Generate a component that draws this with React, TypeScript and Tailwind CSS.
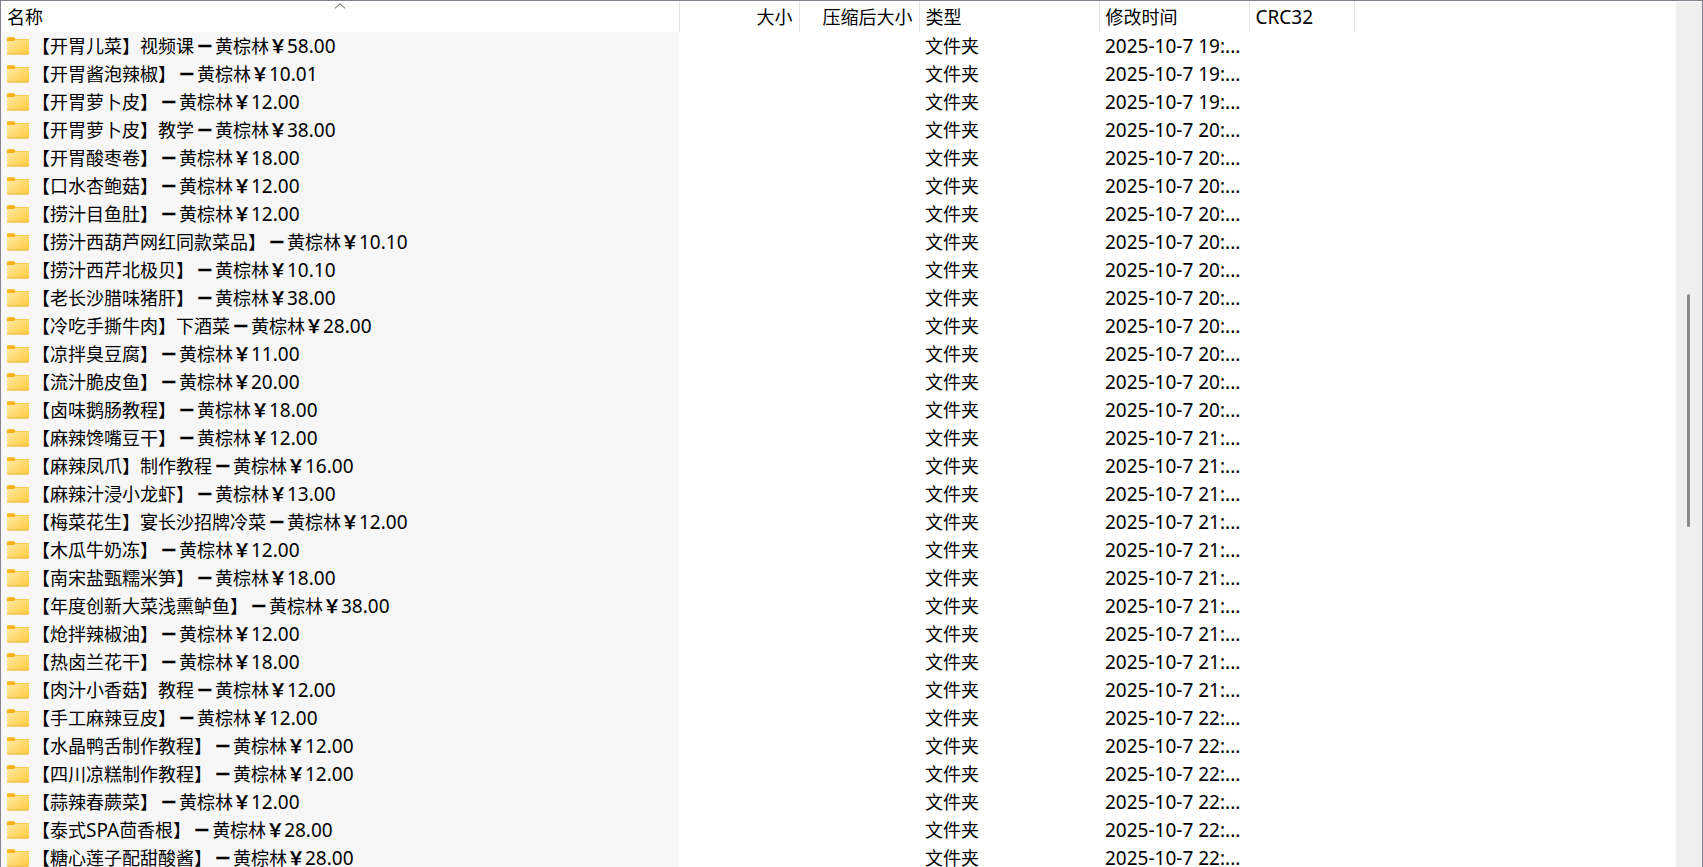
interface Entry {
  title: string;
  price: string;
  modified: string;
}

const entries: Entry[] = [
  { title: '【开胃儿菜】视频课', price: '58.00', modified: '2025-10-7 19:...' },
  { title: '【开胃酱泡辣椒】', price: '10.01', modified: '2025-10-7 19:...' },
  { title: '【开胃萝卜皮】', price: '12.00', modified: '2025-10-7 19:...' },
  { title: '【开胃萝卜皮】教学', price: '38.00', modified: '2025-10-7 20:...' },
  { title: '【开胃酸枣卷】', price: '18.00', modified: '2025-10-7 20:...' },
  { title: '【口水杏鲍菇】', price: '12.00', modified: '2025-10-7 20:...' },
  { title: '【捞汁目鱼肚】', price: '12.00', modified: '2025-10-7 20:...' },
  { title: '【捞汁西葫芦网红同款菜品】', price: '10.10', modified: '2025-10-7 20:...' },
  { title: '【捞汁西芹北极贝】', price: '10.10', modified: '2025-10-7 20:...' },
  { title: '【老长沙腊味猪肝】', price: '38.00', modified: '2025-10-7 20:...' },
  { title: '【冷吃手撕牛肉】下酒菜', price: '28.00', modified: '2025-10-7 20:...' },
  { title: '【凉拌臭豆腐】', price: '11.00', modified: '2025-10-7 20:...' },
  { title: '【流汁脆皮鱼】', price: '20.00', modified: '2025-10-7 20:...' },
  { title: '【卤味鹅肠教程】', price: '18.00', modified: '2025-10-7 20:...' },
  { title: '【麻辣馋嘴豆干】', price: '12.00', modified: '2025-10-7 21:...' },
  { title: '【麻辣凤爪】制作教程', price: '16.00', modified: '2025-10-7 21:...' },
  { title: '【麻辣汁浸小龙虾】', price: '13.00', modified: '2025-10-7 21:...' },
  { title: '【梅菜花生】宴长沙招牌冷菜', price: '12.00', modified: '2025-10-7 21:...' },
  { title: '【木瓜牛奶冻】', price: '12.00', modified: '2025-10-7 21:...' },
  { title: '【南宋盐甄糯米笋】', price: '18.00', modified: '2025-10-7 21:...' },
  { title: '【年度创新大菜浅熏鲈鱼】', price: '38.00', modified: '2025-10-7 21:...' },
  { title: '【炝拌辣椒油】', price: '12.00', modified: '2025-10-7 21:...' },
  { title: '【热卤兰花干】', price: '18.00', modified: '2025-10-7 21:...' },
  { title: '【肉汁小香菇】教程', price: '12.00', modified: '2025-10-7 21:...' },
  { title: '【手工麻辣豆皮】', price: '12.00', modified: '2025-10-7 22:...' },
  { title: '【水晶鸭舌制作教程】', price: '12.00', modified: '2025-10-7 22:...' },
  { title: '【四川凉糕制作教程】', price: '12.00', modified: '2025-10-7 22:...' },
  { title: '【蒜辣春蕨菜】', price: '12.00', modified: '2025-10-7 22:...' },
  { title: '【泰式SPA茴香根】', price: '28.00', modified: '2025-10-7 22:...' },
  { title: '【糖心莲子配甜酸酱】', price: '28.00', modified: '2025-10-7 22:...' },
];

const columns = [
  { label: '名称', width: 'w-[678px]', align: 'text-left', sorted: true },
  { label: '大小', width: 'w-[120px]', align: 'text-right' },
  { label: '压缩后大小', width: 'w-[120px]', align: 'text-right' },
  { label: '类型', width: 'w-[180px]', align: 'text-left' },
  { label: '修改时间', width: 'w-[150px]', align: 'text-left' },
  { label: 'CRC32', width: 'w-[105px]', align: 'text-left', latin: true },
];

function FolderIcon() {
  return (
    <svg className="w-[22px] h-[18px] shrink-0" viewBox="0 0 22 18" aria-hidden="true">
      <defs>
        <linearGradient id="folder" x1="0" y1="0" x2="1" y2="1">
          <stop offset="0" stopColor="#ffe9a6" />
          <stop offset="1" stopColor="#ffcb3d" />
        </linearGradient>
      </defs>
      <path d="M0 1.2Q0 .3 1 .3H6.8Q7.8 .3 8 1.2L8.4 2H21.2Q22 2 22 2.8V8H0Z" fill="#f8b317" />
      <path d="M0 4.6Q0 4 .8 4H6.6Q7.3 4 7.8 3.4L8.2 3Q8.5 2.6 9.2 2.6H21.2Q22 2.6 22 3.4V16.3Q22 17.3 21 17.3H1Q0 17.3 0 16.3Z" fill="url(#folder)" />
      <path d="M0 16.1Q.2 16.7 1 16.7H21Q21.8 16.7 22 16.1Q22 17.5 21 17.5H1Q0 17.5 0 16.1Z" fill="#e9a51c" />
    </svg>
  );
}

function FileName({ title, price }: { title: string; price: string }) {
  return (
    <a href="#" className="flex items-center h-7 pl-[6px] whitespace-pre">
      <FolderIcon />
      <span className="ml-[3px]">
        {title.split(/([A-Z]+)/).map((part, i) => (
          <span key={i} className={i % 2 ? 'text-[19px]' : ''}>{part}</span>
        ))}
      </span>
      <span className="w-[21px] text-center font-bold font-['DejaVu_Sans']">{'\u2796\uFE0E'}</span>
      <span>黄棕林</span>
      <span className="font-bold">￥</span>
      <span className="text-[19px]">{price}</span>
    </a>
  );
}

export default function App() {
  return (
    <div className="flex h-screen overflow-hidden bg-white border-t border-x border-[#85828f] text-black text-[18px] leading-7 font-['Noto_Sans','Noto_Sans_CJK_SC',sans-serif]">
      <div className="flex-1 min-w-0 overflow-hidden">
        <table className="w-full table-fixed border-collapse">
          <thead>
            <tr className="h-[31px]">
              {columns.map((col) => (
                <th key={col.label} className={`${col.width} relative p-0 font-normal border-r border-[#e5e5e5]`}>
                  {col.sorted && (
                    <svg className="absolute top-[2px] left-1/2 -translate-x-1/2 w-3 h-[6px]" viewBox="0 0 12 6" aria-hidden="true">
                      <path d="M.8 5.5L6 .8L11.2 5.5" fill="none" stroke="#555" strokeWidth="1" />
                    </svg>
                  )}
                  <button className={`block w-full px-[6px] whitespace-nowrap ${col.align} ${col.latin ? 'text-[19px]' : ''}`}>
                    {col.label}
                  </button>
                </th>
              ))}
              <th className="p-0"></th>
            </tr>
          </thead>
          <tbody>
            {entries.map((entry) => (
              <tr key={entry.title} className="h-7">
                <td className="p-0 bg-[#f7f7f7]">
                  <FileName title={entry.title} price={entry.price} />
                </td>
                <td className="p-0"></td>
                <td className="p-0"></td>
                <td className="p-0 pl-[6px]">文件夹</td>
                <td className="p-0 pl-[6px] text-[19px] whitespace-nowrap">{entry.modified}</td>
                <td className="p-0"></td>
                <td className="p-0"></td>
              </tr>
            ))}
          </tbody>
        </table>
      </div>

      {/* Scrollbar */}
      <div className="flex flex-col items-center w-[26px] pr-[2px] mt-px bg-[#efefef]">
        <div className="flex-[292]"></div>
        <div className="flex-[234] w-[3px] rounded-full bg-[#8a8a8a]"></div>
        <div className="flex-[340]"></div>
      </div>
    </div>
  );
}
